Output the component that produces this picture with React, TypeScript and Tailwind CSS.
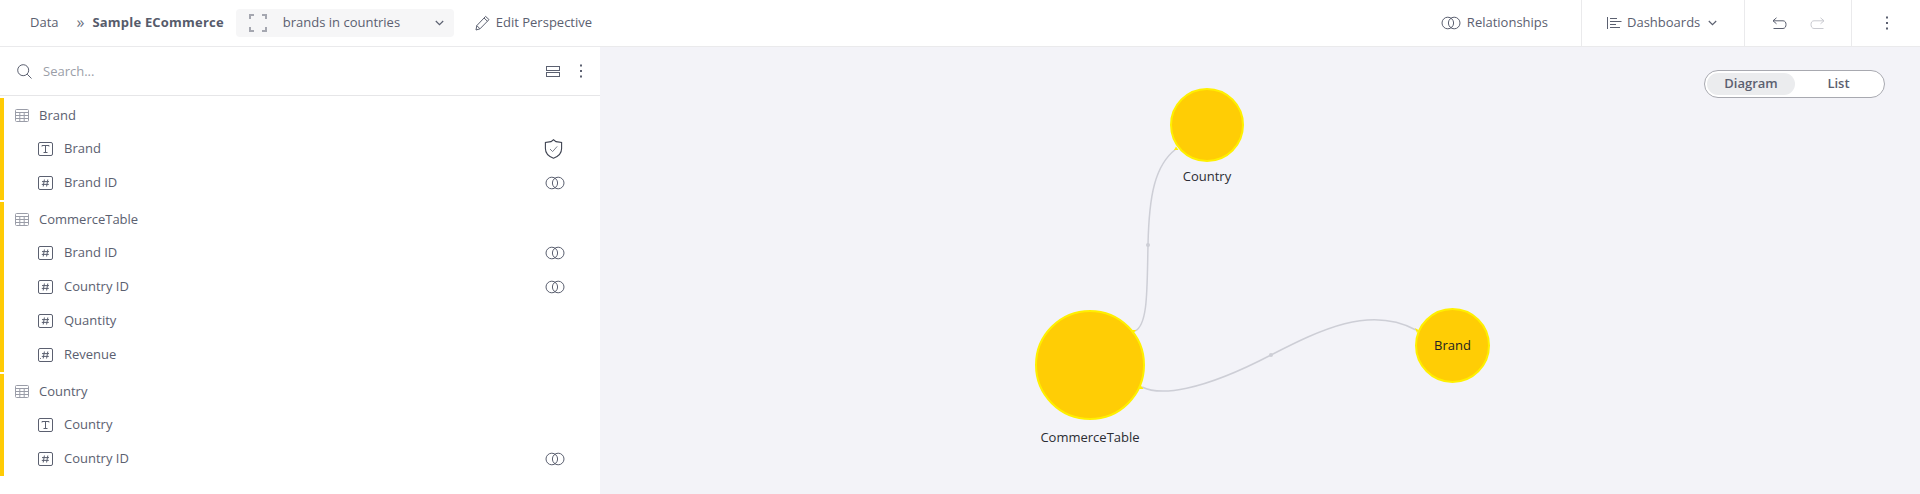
import React from "react";

const font = { fontFamily: '"Open Sans", "Noto Sans", sans-serif' };

function Rings({ className = "" }: { className?: string }) {
  return (
    <svg width="20" height="14" viewBox="0 0 20 14" fill="none" stroke="#5b6070" strokeWidth="1" className={className}>
      <circle cx="6.8" cy="7" r="5.8" />
      <circle cx="13.2" cy="7" r="5.8" />
    </svg>
  );
}

function TableIcon() {
  return (
    <svg width="14" height="13" viewBox="0 0 14 13" fill="none" stroke="#9a9da8" strokeWidth="1">
      <rect x="0.5" y="0.5" width="13" height="12" rx="1" />
      <path d="M0.5 3.5H13.5M0.5 6.5H13.5M0.5 9.5H13.5M4.8 3.5V12.5M9.2 3.5V12.5" />
    </svg>
  );
}

function TypeIcon({ kind }: { kind: "T" | "#" | ".#" }) {
  return (
    <svg width="15" height="14" viewBox="0 0 15 14" fill="none" stroke="#5b6070" strokeWidth="1">
      <rect x="0.5" y="0.5" width="14" height="13" rx="1.5" />
      {kind === "T" && <path d="M4 4.5V3.5H11V4.5M7.5 3.5V10.5M5.5 10.5H9.5" />}
      {kind !== "T" && <path d="M6.4 3.5L5.2 10.5M9.8 3.5L8.6 10.5M4 5.6H11M3.8 8.4H10.8" />}
      {kind === ".#" && <path d="M2.5 10.2V11" />}
    </svg>
  );
}

function Shield() {
  return (
    <svg className="mr-[2px]" width="19" height="20" viewBox="0 0 19 20" fill="none" stroke="#3f4452" strokeWidth="1.1">
      <path d="M9.5 0.8L12 2.6L17.6 3.4V9.5C17.6 14 14 17.6 9.5 19.2C5 17.6 1.4 14 1.4 9.5V3.4L7 2.6Z" />
      <path d="M6 10L8.6 12.6L13.2 7.4" stroke="#7b7f8b" strokeWidth="1" />
    </svg>
  );
}

function Chevron({ color = "#5b6070" }: { color?: string }) {
  return (
    <svg width="9" height="6" viewBox="0 0 9 6" fill="none" stroke={color} strokeWidth="1.2">
      <path d="M0.8 1L4.5 4.6L8.2 1" />
    </svg>
  );
}

function Dots() {
  return (
    <svg width="4" height="14" viewBox="0 0 4 14" fill="#5b6070">
      <rect x="1" y="0.5" width="2" height="2" />
      <rect x="1" y="6" width="2" height="2" />
      <rect x="1" y="11.5" width="2" height="2" />
    </svg>
  );
}

type Field = { kind: "T" | "#" | ".#"; name: string; badge?: "shield" | "rings" };
const groups: { name: string; fields: Field[] }[] = [
  {
    name: "Brand",
    fields: [
      { kind: "T", name: "Brand", badge: "shield" },
      { kind: "#", name: "Brand ID", badge: "rings" },
    ],
  },
  {
    name: "CommerceTable",
    fields: [
      { kind: "#", name: "Brand ID", badge: "rings" },
      { kind: "#", name: "Country ID", badge: "rings" },
      { kind: "#", name: "Quantity" },
      { kind: ".#", name: "Revenue" },
    ],
  },
  {
    name: "Country",
    fields: [
      { kind: "T", name: "Country" },
      { kind: "#", name: "Country ID", badge: "rings" },
    ],
  },
];

function Node({ left, top, size, label, labelTop }: { left: number; top: number; size: number; label: string; labelTop?: number }) {
  return (
    <>
      <div
        className="absolute rounded-full bg-[#ffcd05] border-2 border-[#fff000] flex items-center justify-center text-[13px] text-[#222]"
        style={{ left, top, width: size, height: size }}
      >
        {labelTop === undefined ? label : null}
      </div>
      {labelTop !== undefined && (
        <div
          className="absolute text-[13px] text-[#2b2d33] text-center whitespace-nowrap"
          style={{ left: left - 40, width: size + 80, top: labelTop }}
        >
          {label}
        </div>
      )}
    </>
  );
}

export default function App() {
  return (
    <div className="w-[1920px] h-[494px] flex flex-col overflow-hidden bg-white" style={font}>
      <header className="h-[47px] shrink-0 flex items-stretch border-b border-[#eaeaec] text-[13px] text-[#5b6070]">
        <div className="flex items-center pl-[30px]">
          <span>Data</span>
          <span className="ml-[18px] text-[16px] text-[#6b7080] leading-none pb-[2px]">»</span>
          <span className="ml-[8px] font-bold text-[#565b6b] tracking-[0.2px]">Sample ECommerce</span>
          <div className="ml-[12px] w-[218px] h-[28px] rounded bg-[#f6f6f7] flex items-center pl-[13px] pr-[10px]">
            <svg width="18" height="18" viewBox="0 0 18 18" fill="none" stroke="#a5a7b0" strokeWidth="2">
              <path d="M1 5V1H5M13 1H17V5M17 13V17H13M5 17H1V13" />
            </svg>
            <span className="ml-[16px] flex-1">brands in countries</span>
            <Chevron />
          </div>
          <svg className="ml-[21px]" width="15" height="16" viewBox="0 0 15 16" fill="none" stroke="#5b6070" strokeWidth="1">
            <path d="M1 15L1.8 10.6L10.6 1.4L14 4.6L5 13.8ZM1.8 10.6L5 13.8M9 3L12.4 6.2" />
          </svg>
          <span className="ml-[6px]">Edit Perspective</span>
        </div>
        <div className="flex-1" />
        <div className="flex items-center pr-[33px]">
          <Rings />
          <span className="ml-[6px]">Relationships</span>
        </div>
        <div className="w-[163px] border-l border-[#eaeaec] flex items-center pl-[25px]">
          <svg width="15" height="12" viewBox="0 0 15 12" fill="none" stroke="#5b6070" strokeWidth="1">
            <path d="M0.5 0V12M3 1.5H10M3 4.5H14.5M3 7.5H9M3 10.5H13" />
          </svg>
          <span className="ml-[5px]">Dashboards</span>
          <span className="ml-[8px]">
            <Chevron />
          </span>
        </div>
        <div className="w-[107px] border-l border-[#eaeaec] flex items-center pl-[27px]">
          <svg width="15" height="13" viewBox="0 0 15 13" fill="none" stroke="#5b6070" strokeWidth="1">
            <path d="M4.5 0.8L1 3.8L4.5 6.8M1 3.8H11C13 3.8 14 5.4 14 7.4C14 9.6 13 11.5 11 11.5H1.5" />
          </svg>
          <svg className="ml-[23px]" width="15" height="13" viewBox="0 0 15 13" fill="none" stroke="#c9cad0" strokeWidth="1">
            <path d="M10.5 0.8L14 3.8L10.5 6.8M14 3.8H4C2 3.8 1 5.4 1 7.4C1 9.6 2 11.5 4 11.5H13.5" />
          </svg>
        </div>
        <div className="w-[69px] border-l border-[#eaeaec] flex items-center pl-[33px]">
          <Dots />
        </div>
      </header>

      <main className="flex-1 flex min-h-0">
        <aside className="w-[600px] shrink-0 bg-white">
          <div className="h-[49px] flex items-center border-b border-[#e6e6e8] pl-[17px] pr-[17px]">
            <svg width="15" height="15" viewBox="0 0 15 15" fill="none" stroke="#5b6070" strokeWidth="1">
              <circle cx="6.2" cy="6.2" r="5.5" />
              <path d="M10.2 10.2L14.5 14.5" />
            </svg>
            <span className="ml-[11px] flex-1 pt-[1px] text-[13px] text-[#9b9ea8]">Search...</span>
            <svg width="14" height="11" viewBox="0 0 14 11" fill="none" stroke="#5b6070" strokeWidth="1">
              <rect x="0.5" y="0.5" width="13" height="4" />
              <rect x="0.5" y="6.5" width="13" height="4" />
            </svg>
            <span className="ml-[19px]">
              <Dots />
            </span>
          </div>
          <div className="pt-[2px] flex flex-col gap-[2px]">
            {groups.map((g) => (
              <div key={g.name} className="border-l-4 border-[#ffcb05]">
                <div className="h-[34px] flex items-center pl-[11px] text-[13px] text-[#5b6070]">
                  <TableIcon />
                  <span className="ml-[10px] pt-[1px]">{g.name}</span>
                </div>
                {g.fields.map((f) => (
                  <div key={f.name} className="h-[34px] flex items-center pl-[34px] pr-[35px] text-[13px] text-[#5b6070]">
                    <TypeIcon kind={f.kind} />
                    <span className="ml-[11px] flex-1">{f.name}</span>
                    {f.badge === "shield" && <Shield />}
                    {f.badge === "rings" && <Rings />}
                  </div>
                ))}
              </div>
            ))}
          </div>
        </aside>

        <section className="flex-1 relative bg-[#f3f3f8]">
          <div className="absolute left-[1104px] top-[23px] w-[181px] h-[28px] rounded-full border border-[#a8a9b0] bg-white flex items-center p-[2px] text-[13px] font-semibold text-[#5b6070]">
            <div className="w-[88px] h-[22px] rounded-full bg-[#ebecee] flex items-center justify-center">Diagram</div>
            <div className="flex-1 flex items-center justify-center">List</div>
          </div>

          <Node left={570} top={41} size={74} label="Country" labelTop={120} />
          <Node left={435} top={263} size={110} label="CommerceTable" labelTop={381} />
          <Node left={815} top={261} size={75} label="Brand" />

          <svg className="absolute left-0 top-0" width="1320" height="447" viewBox="600 47 1320 447" fill="none" stroke="#cdced6" strokeWidth="1.5">
            <path d="M1135 331C1148 325 1147 290 1148 245C1149 195 1155 165 1176 149" />
            <path d="M1142 387C1160 396 1200 392 1271 355C1320 330 1370 305 1416 330" />
            <circle cx="1148" cy="245" r="2" fill="#cdced6" stroke="none" />
            <circle cx="1271" cy="355" r="2" fill="#cdced6" stroke="none" />
            <path d="M1131 330L1136 330L1133 334Z" fill="#fff000" stroke="none" />
            <path d="M1139 389L1143.5 389L1140.5 385Z" fill="#fff000" stroke="none" />
            <path d="M1174 150L1178.5 150L1176 146.5Z" fill="#fff000" stroke="none" />
            <path d="M1415 328L1418.5 330L1417 333Z" fill="#fff000" stroke="none" />
          </svg>
        </section>
      </main>
    </div>
  );
}
